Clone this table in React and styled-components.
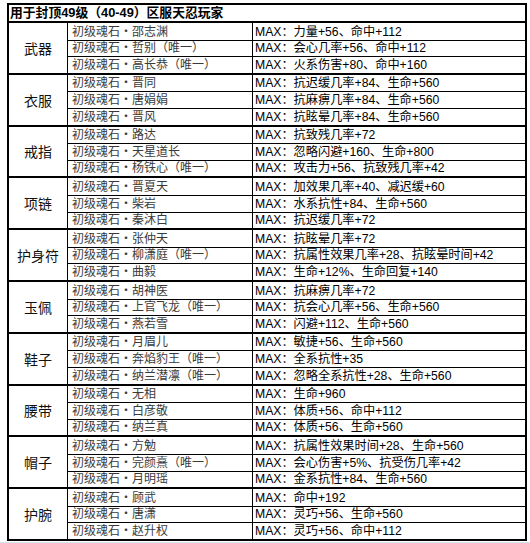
import React from "react";
import styled, { createGlobalStyle } from "styled-components";

const GlobalStyle = createGlobalStyle`
  html, body {
    margin: 0;
    padding: 0;
    background: #ffffff;
  }
  body {
    font-family: "Liberation Sans", "Noto Sans CJK SC", sans-serif;
  }
`;

const groups = [
  {
    slot: "武器",
    rows: [
      ["初级魂石・邵志渊", "MAX：力量+56、命中+112"],
      ["初级魂石・哲别（唯一）", "MAX：会心几率+56、命中+112"],
      ["初级魂石・高长恭（唯一）", "MAX：火系伤害+80、命中+160"],
    ],
  },
  {
    slot: "衣服",
    rows: [
      ["初级魂石・晋同", "MAX：抗迟缓几率+84、生命+560"],
      ["初级魂石・唐娟娟", "MAX：抗麻痹几率+84、生命+560"],
      ["初级魂石・晋风", "MAX：抗眩晕几率+84、生命+560"],
    ],
  },
  {
    slot: "戒指",
    rows: [
      ["初级魂石・路达", "MAX：抗致残几率+72"],
      ["初级魂石・天星道长", "MAX：忽略闪避+160、生命+800"],
      ["初级魂石・杨铁心（唯一）", "MAX：攻击力+56、抗致残几率+42"],
    ],
  },
  {
    slot: "项链",
    rows: [
      ["初级魂石・晋夏天", "MAX：加效果几率+40、减迟缓+60"],
      ["初级魂石・柴岩", "MAX：水系抗性+84、生命+560"],
      ["初级魂石・秦沐白", "MAX：抗迟缓几率+72"],
    ],
  },
  {
    slot: "护身符",
    rows: [
      ["初级魂石・张仲天", "MAX：抗眩晕几率+72"],
      ["初级魂石・柳潇庭（唯一）", "MAX：抗属性效果几率+28、抗眩晕时间+42"],
      ["初级魂石・曲毅", "MAX：生命+12%、生命回复+140"],
    ],
  },
  {
    slot: "玉佩",
    rows: [
      ["初级魂石・胡神医", "MAX：抗麻痹几率+72"],
      ["初级魂石・上官飞龙（唯一）", "MAX：抗会心几率+56、生命+560"],
      ["初级魂石・燕若雪", "MAX：闪避+112、生命+560"],
    ],
  },
  {
    slot: "鞋子",
    rows: [
      ["初级魂石・月眉儿", "MAX：敏捷+56、生命+560"],
      ["初级魂石・奔焰豹王（唯一）", "MAX：全系抗性+35"],
      ["初级魂石・纳兰潜凛（唯一）", "MAX：忽略全系抗性+28、生命+560"],
    ],
  },
  {
    slot: "腰带",
    rows: [
      ["初级魂石・无相", "MAX：生命+960"],
      ["初级魂石・白彦敬", "MAX：体质+56、命中+112"],
      ["初级魂石・纳兰真", "MAX：体质+56、生命+560"],
    ],
  },
  {
    slot: "帽子",
    rows: [
      ["初级魂石・方勉", "MAX：抗属性效果时间+28、生命+560"],
      ["初级魂石・完颜熹（唯一）", "MAX：会心伤害+5%、抗受伤几率+42"],
      ["初级魂石・月明瑶", "MAX：金系抗性+84、生命+560"],
    ],
  },
  {
    slot: "护腕",
    rows: [
      ["初级魂石・顾武", "MAX：命中+192"],
      ["初级魂石・唐潇", "MAX：灵巧+56、生命+560"],
      ["初级魂石・赵升权", "MAX：灵巧+56、命中+112"],
    ],
  },
];

const App = () => {
  return (
    <>
      <GlobalStyle />
      <Page>
        <Sheet>
          <Title>用于封顶49级（40-49）区服天忍玩家</Title>
          {groups.map((g) => (
            <Group key={g.slot}>
              <Slot>{g.slot}</Slot>
              {g.rows.map(([name, value], i) => (
                <React.Fragment key={name}>
                  <Name first={i === 0}>{name}</Name>
                  <Value first={i === 0}>{value}</Value>
                </React.Fragment>
              ))}
            </Group>
          ))}
        </Sheet>
        <StatusBar />
      </Page>
    </>
  );
};

export default App;

const Page = styled.div`
  width: 530px;
  height: 543px;
  display: flex;
  flex-direction: column;
  overflow: hidden;
  background: #ffffff;
`;

const Sheet = styled.div`
  margin: 3px 0 0 7px;
  width: 520px;
  box-sizing: border-box;
  border: 2px solid #000;
  display: flex;
  flex-direction: column;
`;

const Title = styled.div`
  height: 16px;
  line-height: 16px;
  padding-left: 1px;
  font-size: 12.8px;
  font-weight: bold;
  color: #000;
  white-space: nowrap;
`;

const Group = styled.div`
  display: grid;
  grid-template-columns: 59px 185px 1fr;
  grid-template-rows: repeat(3, 1fr);
  height: 51.8px;
  box-sizing: border-box;
  border-top: 2px solid #000;
`;

const Slot = styled.div`
  grid-row: 1 / span 3;
  grid-column: 1;
  display: flex;
  align-items: center;
  justify-content: center;
  border-right: 1.5px solid #000;
  font-size: 14px;
  color: #111;
`;

const Cell = styled.div`
  box-sizing: border-box;
  border-top: ${(p) => (p.first ? "none" : "1px solid #000")};
  font-size: 12px;
  line-height: 16px;
  white-space: nowrap;
  overflow: hidden;
  display: flex;
  align-items: flex-end;
`;

const Name = styled(Cell)`
  grid-column: 2;
  padding-left: 4px;
  color: #3a3a3a;
  border-right: 1.5px solid #000;
`;

const Value = styled(Cell)`
  grid-column: 3;
  padding-left: 2px;
  font-size: 12.2px;
  color: #000;
`;

const StatusBar = styled.div`
  flex: 1;
  margin-top: 1px;
  background: linear-gradient(#e4ebf5, #c9d7ea);
`;
